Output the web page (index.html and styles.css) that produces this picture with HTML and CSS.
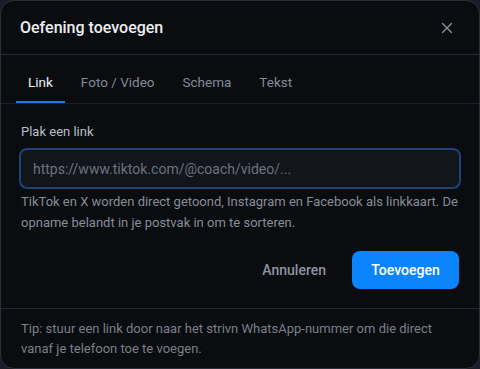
FILE: index.html
```html
<!DOCTYPE html>
<html lang="nl">
<head>
    <meta charset="UTF-8">
    <meta name="viewport" content="width=device-width, initial-scale=1.0">
    <title>Oefening toevoegen</title>
    <link rel="stylesheet" href="styles.css">
</head>
<body>
    <!-- Dialog for adding an exercise -->
    <div class="dialog">
        <div class="dialogHeader">
            <h2 class="dialogTitle">Oefening toevoegen</h2>
            <button class="closeBtn" aria-label="Sluiten">
                <svg width="12" height="12" viewBox="0 0 12 12">
                    <path d="M1.5 1.5 L10.5 10.5 M10.5 1.5 L1.5 10.5" stroke="currentColor" stroke-width="1.4" stroke-linecap="round"/>
                </svg>
            </button>
        </div>

        <div class="tabs">
            <button class="tab active">Link</button>
            <button class="tab">Foto / Video</button>
            <button class="tab">Schema</button>
            <button class="tab">Tekst</button>
        </div>

        <div class="dialogBody">
            <label class="fieldLabel" for="linkInput">Plak een link</label>
            <input class="linkInput" id="linkInput" type="text" placeholder="https://www.tiktok.com/@coach/video/...">
            <p class="helpText">TikTok en X worden direct getoond, Instagram en Facebook als linkkaart. De opname belandt in je postvak in om te sorteren.</p>

            <div class="actions">
                <button class="btnGhost">Annuleren</button>
                <button class="btnPrimary">Toevoegen</button>
            </div>
        </div>

        <div class="dialogFooter">
            <p class="tipText">Tip: stuur een link door naar het strivn WhatsApp-nummer om die direct vanaf je telefoon toe te voegen.</p>
        </div>
    </div>
</body>
</html>
```

FILE: styles.css
```css
/* Page backdrop */
body {
    margin: 0;
    padding: 0;
    background: #1b1e26;
    font-family: Roboto, 'Noto Sans', sans-serif;
}

/* Dialog box */
.dialog {
    box-sizing: border-box;
    width: 480px;
    height: 369px;
    background: #0b0c10;
    border: 1px solid #2a2f39;
    border-radius: 14px;
    display: flex;
    flex-direction: column;
}

/* Header with title and close button */
.dialogHeader {
    height: 53px;
    display: flex;
    align-items: center;
    justify-content: space-between;
    padding: 0 22px 0 19px;
    border-bottom: 1px solid #262b36;
}

.dialogTitle {
    margin: 0;
    font-size: 16px;
    font-weight: 500;
    color: #eceef1;
}

.closeBtn {
    background: none;
    border: none;
    padding: 4px;
    color: #8c919b;
    display: flex;
}

/* Tabs */
.tabs {
    display: flex;
    gap: 4px;
    margin-top: 8px;
    padding: 0 15px;
    border-bottom: 1px solid #1d2028;
}

.tab {
    height: 40px;
    padding: 0 12px;
    background: none;
    border: none;
    border-bottom: 2px solid transparent;
    font-family: inherit;
    font-size: 13.5px;
    color: #858a94;
}

.tab.active {
    color: #eceef1;
    border-bottom-color: #1a7ee6;
}

/* Body */
.dialogBody {
    padding: 19px 20px 0 20px;
    display: flex;
    flex-direction: column;
}

.fieldLabel {
    font-size: 13px;
    color: #b9bdc5;
    line-height: 18px;
    margin-bottom: 7px;
}

.linkInput {
    box-sizing: border-box;
    height: 41px;
    margin: 0 0 0 -2px;
    width: 442px;
    padding: 0 12px;
    background: #12151c;
    border: 2px solid #1c4474;
    border-radius: 8px;
    font-family: inherit;
    font-size: 14px;
    color: #eceef1;
    outline: none;
}

.linkInput::placeholder {
    color: #6d727c;
}

.helpText {
    margin: 2px 0 0 0;
    font-size: 13px;
    line-height: 21px;
    color: #878c96;
}

/* Action buttons */
.actions {
    display: flex;
    justify-content: flex-end;
    align-items: center;
    gap: 8px;
    margin-top: 18px;
}

.btnGhost {
    height: 38px;
    padding: 0 18px;
    background: none;
    border: none;
    font-family: inherit;
    font-size: 14px;
    font-weight: 500;
    color: #8f949e;
}

.btnPrimary {
    height: 38px;
    width: 107px;
    background: #0a84ff;
    border: none;
    border-radius: 8px;
    font-family: inherit;
    font-size: 14px;
    font-weight: 500;
    color: #ffffff;
}

/* Footer tip */
.dialogFooter {
    margin-top: 19px;
    border-top: 1px solid #22262f;
    padding: 10px 20px 0 20px;
}

.tipText {
    margin: 0;
    font-size: 13px;
    line-height: 19.5px;
    color: #7a7f89;
}
```
